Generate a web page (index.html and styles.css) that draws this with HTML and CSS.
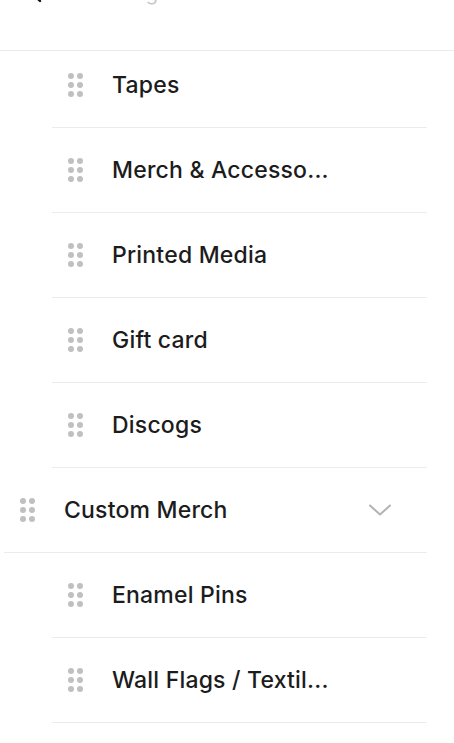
FILE: index.html
```html
<!DOCTYPE html>
<html>
<head>
<meta charset="utf-8">
<link rel="stylesheet" href="styles.css">
</head>
<body>
<header class="topbar">
  <div class="topbar-inner">
    <svg class="back" width="12" height="20" viewBox="0 0 12 20"><path d="M10 2 L2 10 L10 18" fill="none" stroke="#111" stroke-width="2.4" stroke-linecap="round" stroke-linejoin="round"/></svg>
    <span class="crumb">Categories</span>
  </div>
</header>
<ul class="list">
  <li class="row nested first"><span class="grip"><i></i><i></i><i></i><i></i><i></i><i></i></span><span class="label">Tapes</span></li>
  <li class="row nested"><span class="grip"><i></i><i></i><i></i><i></i><i></i><i></i></span><span class="label">Merch &amp; Accesso...</span></li>
  <li class="row nested"><span class="grip"><i></i><i></i><i></i><i></i><i></i><i></i></span><span class="label">Printed Media</span></li>
  <li class="row nested"><span class="grip"><i></i><i></i><i></i><i></i><i></i><i></i></span><span class="label">Gift card</span></li>
  <li class="row nested"><span class="grip"><i></i><i></i><i></i><i></i><i></i><i></i></span><span class="label">Discogs</span></li>
  <li class="row"><span class="grip"><i></i><i></i><i></i><i></i><i></i><i></i></span><span class="label">Custom Merch</span>
    <svg class="chev" width="24" height="12" viewBox="0 0 24 12"><path d="M2 1.5 L12 10.5 L22 1.5" fill="none" stroke="#b3b3b3" stroke-width="2" stroke-linecap="round" stroke-linejoin="round"/></svg>
  </li>
  <li class="row nested"><span class="grip"><i></i><i></i><i></i><i></i><i></i><i></i></span><span class="label">Enamel Pins</span></li>
  <li class="row nested"><span class="grip"><i></i><i></i><i></i><i></i><i></i><i></i></span><span class="label">Wall Flags / Textil...</span></li>
</ul>
</body>
</html>
```
FILE: styles.css
```css
html, body {
  margin: 0;
  padding: 0;
  background: #ffffff;
  font-family: "Inter", "Liberation Sans", sans-serif;
  color: #1c1c1c;
  overflow: hidden;
}

.topbar {
  height: 51px;
  box-sizing: border-box;
  border-bottom: 1px solid #ececec;
  overflow: hidden;
}

.topbar-inner {
  display: flex;
  align-items: center;
  gap: 60px;
  margin-top: -17px;
  padding-left: 30px;
  height: 20px;
}

.crumb {
  font-size: 20px;
  color: #c8c8c8;
}

.list {
  list-style: none;
  margin: 0;
  padding: 0 27px 0 4px;
}

.row {
  display: flex;
  align-items: center;
  height: 85px;
  box-sizing: border-box;
  border-bottom: 1px solid #ececec;
  padding: 0 35px 0 16px;
}

.row.nested {
  margin-left: 48px;
  padding-left: 16px;
}

.row.first {
  height: 77px;
  padding-bottom: 8px;
}

.grip {
  display: grid;
  grid-template-columns: 6px 6px;
  grid-template-rows: 6px 6px 6px;
  column-gap: 3px;
  row-gap: 3px;
  width: 15px;
  margin-right: 29px;
}

.grip i {
  display: block;
  width: 6px;
  height: 6px;
  border-radius: 50%;
  background: #c0c0c0;
}

.label {
  font-size: 23px;
  font-weight: 500;
  letter-spacing: 0.2px;
  flex: 1;
}

.chev {
  display: block;
}
```
